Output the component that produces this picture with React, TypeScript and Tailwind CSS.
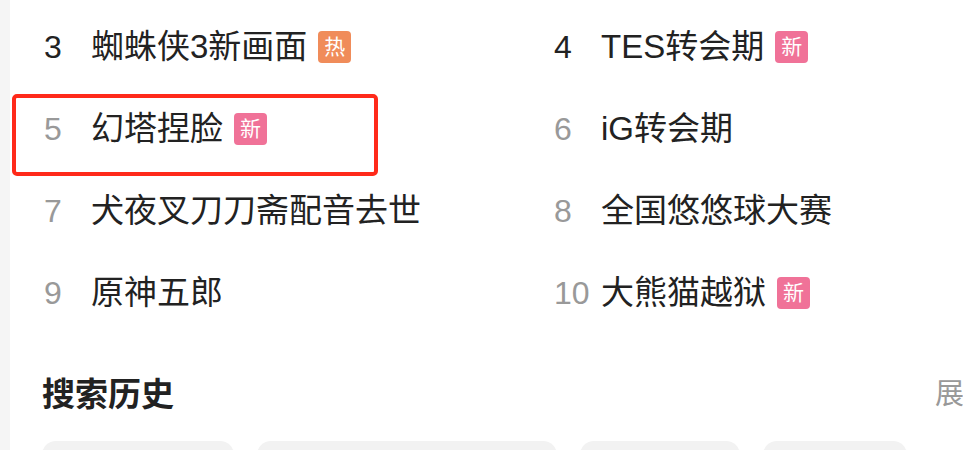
const items = [
  { n: 3, t: '蜘蛛侠3新画面', tag: '热', top: true },
  { n: 4, t: 'TES转会期', tag: '新', top: true },
  { n: 5, t: '幻塔捏脸', tag: '新' },
  { n: 6, t: 'iG转会期' },
  { n: 7, t: '犬夜叉刀刀斋配音去世' },
  { n: 8, t: '全国悠悠球大赛' },
  { n: 9, t: '原神五郎' },
  { n: 10, t: '大熊猫越狱', tag: '新' },
];

const history = ['w-[192px]', 'w-[300px]', 'w-[160px]', 'w-[144px]'];

export default function App() {
  return (
    <div
      className="relative flex w-[963px] h-[450px] overflow-hidden bg-white text-[#222]"
      style={{ fontFamily: '"Liberation Sans", "Noto Sans CJK SC", sans-serif' }}
    >
      <aside className="w-[10px] shrink-0 bg-[#f5f5f5]" />
      <main className="flex-1 pl-[32px] pt-[6px]">
        <div className="grid grid-cols-[510px_1fr]">
          {items.map((it) => (
            <div key={it.n} className="flex h-[82px] items-center">
              <span className={`w-[49px] shrink-0 pl-[2px] text-[32px] ${it.top ? 'text-[#222]' : 'text-[#999]'}`}>{it.n}</span>
              <span className="text-[33px] whitespace-nowrap">{it.t}</span>
              {it.tag && (
                <span
                  className={`ml-[11px] flex h-[32px] w-[33px] items-center justify-center rounded-[4px] text-[21px] text-white ${
                    it.tag === '热' ? 'bg-[#f08c5a]' : 'bg-[#f07298]'
                  }`}
                >
                  {it.tag}
                </span>
              )}
            </div>
          ))}
        </div>

        <div className="mt-[41px] flex h-[40px] items-center">
          <h2 className="w-[893px] shrink-0 text-[33px] font-bold">搜索历史</h2>
          <span className="whitespace-nowrap text-[29px] text-[#999]">展开</span>
        </div>

        <div className="mt-[26px] flex gap-[23px]">
          {history.map((w, i) => (
            <div key={i} className={`${w} h-[40px] shrink-0 rounded-[14px] bg-[#f2f2f2]`} />
          ))}
        </div>
      </main>

      <div className="absolute left-[12px] top-[94px] h-[82px] w-[366px] rounded-[5px] border-4 border-[#ff2a1a]" />
    </div>
  );
}
